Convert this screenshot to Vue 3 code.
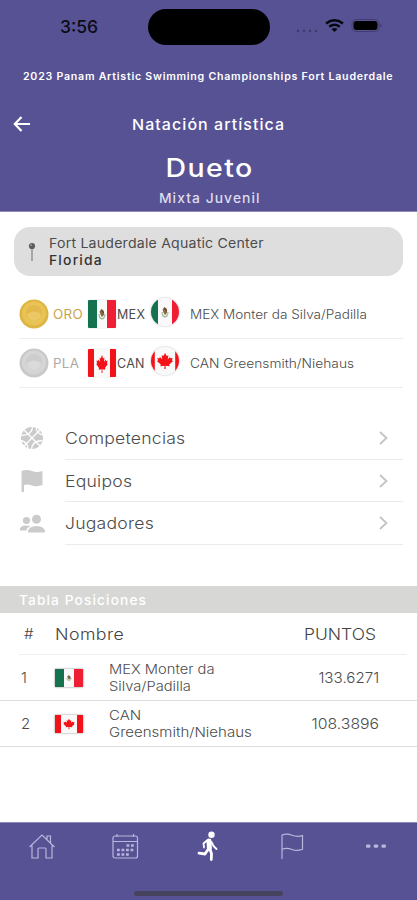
<script setup>
import { h } from 'vue'

const medals = [
  { medal: 'ORO', kind: 'gold', code: 'MEX', name: 'MEX Monter da Silva/Padilla' },
  { medal: 'PLA', kind: 'silver', code: 'CAN', name: 'CAN Greensmith/Niehaus' },
]
const menu = [
  { label: 'Competencias', icon: 'ball' },
  { label: 'Equipos', icon: 'flag' },
  { label: 'Jugadores', icon: 'people' },
]
const standings = [
  { pos: 1, code: 'MEX', first: 'MEX Monter da', second: 'Silva/Padilla', points: '133.6271' },
  { pos: 2, code: 'CAN', first: 'CAN', second: 'Greensmith/Niehaus', points: '108.3896' },
]

// Maple leaf centred on 0,0, about 18 units across
const LEAF = 'M0-9L2-5.500l2-1-.7 4.500L6-4.500l.6 1.500 2.600-.4-.9 2.700L9.500.2 5 4l.5 1.800L.6 5.200.8 9H-.8l.2-3.800-4.900.6L-5 4-9.500.2l1.200-.9-.9-2.700 2.600.4.6-1.500L-3.300-2-4-6.500l2 1z'
function Flag({ code, shape }) {
  const mex = code === 'MEX'
  const round = shape === 'round'
  const side = mex ? (round ? 7 : 9) : round ? 3.8 : 6
  const leaf = { square: 'translate(14 15) scale(.6 1)', round: 'translate(14 14) scale(.84 .9)', small: 'translate(14 14) scale(.6 .9)' }[shape]
  const emblem = shape === 'small' ? 'translate(14 14) scale(.9 1.300)' : 'translate(14 14) scale(1.200 1.600)'
  return h('svg', { viewBox: '0 0 28 28', preserveAspectRatio: 'none' }, [
    h('rect', { width: 28, height: 28, fill: '#f9f9f9' }),
    h('rect', { width: side, height: 28, fill: mex ? '#15724f' : '#f31218' }),
    h('rect', { x: 28 - side, width: side, height: 28, fill: mex ? '#ee1e34' : '#f31218' }),
    mex
      ? h('g', { fill: 'none', transform: emblem }, [
          h('path', { d: 'M-2.500 0q.2 3 2.500 3 2.200 0 2.500-3', stroke: '#a3bb98', 'stroke-width': 1 }),
          h('path', { d: 'M-2-1.500l1.500-1.700L1.500-2 1.700.5 0 2-1.200.5z', fill: '#8b6a42' }),
          h('path', { d: 'M-.5-2.500l2 2', stroke: '#5b4c38', 'stroke-width': 1 }),
        ])
      : h('path', { d: LEAF, transform: leaf, fill: '#f31218' }),
  ])
}
Flag.props = ['code', 'shape']
</script>

<template>
  <div class="screen">
    <header class="top">
      <div class="status">
        <span class="time">3:56</span>
        <div class="island"></div>
        <svg class="signal" viewBox="0 0 86 20">
          <g fill="#403a70"><circle cx="2" cy="14" r="1.300" /><circle cx="8" cy="14" r="1.300" /><circle cx="14" cy="14" r="1.300" /><circle cx="20" cy="14" r="1.300" /></g>
          <g fill="none" stroke="#070711" stroke-width="2.500"><path d="M30 6.500q8.500-6.400 17 0" /><path d="M33.200 9.800q5.300-4 10.600 0" /></g>
          <path d="M35.500 12.100q3-2.200 6 0l-3 2.800z" fill="#070711" />
          <rect x="56" y="2.500" width="27" height="12" rx="4" fill="none" stroke="#423c73" />
          <rect x="57.500" y="4" width="24" height="9" rx="3" fill="#000" />
          <path d="M84.500 6.500q2 2 0 4z" fill="#37325e" />
        </svg>
      </div>
      <div class="event"><span>2023 Panam Artistic Swimming Championships Fort Lauderdale</span></div>
      <div class="nav">
        <svg class="back" viewBox="0 0 18 16"><path d="M8.500 1L1.800 8l6.700 7M2 8h15" fill="none" stroke="#fff" stroke-width="2.200" /></svg>
        <span class="sport">Natación artística</span>
      </div>
      <h1>Dueto</h1>
      <div class="category">Mixta Juvenil</div>
    </header>

    <main>
      <section class="venue">
        <svg viewBox="0 0 10 20"><circle cx="5" cy="4" r="3.100" fill="#5c5c5c" /><circle cx="4" cy="3" r="1" fill="#999" /><path d="M5 7v12" stroke="#888" stroke-width="1.300" /></svg>
        <div><p class="place">Fort Lauderdale Aquatic Center</p><p class="state">Florida</p></div>
      </section>

      <section class="medals">
        <div v-for="m in medals" :key="m.code" class="medal-row">
          <svg class="coin" :class="m.kind" viewBox="0 0 30 30">
            <circle class="rim" cx="15" cy="15" r="14.500" />
            <circle class="inner" cx="15" cy="14.500" r="12" />
            <circle class="face" cx="15" cy="14" r="8" />
            <path class="shine" d="M8 15q7-5 14 0a7 7 0 0 1-14 0z" />
          </svg>
          <span class="medal-name" :class="m.kind">{{ m.medal }}</span>
          <Flag class="square" shape="square" :code="m.code" />
          <span class="code" :class="m.code">{{ m.code }}</span>
          <div class="round"><Flag shape="round" :code="m.code" /></div>
          <span class="athletes" :class="m.code">{{ m.name }}</span>
        </div>
      </section>

      <nav class="menu">
        <div v-for="item in menu" :key="item.label" class="menu-row">
          <svg v-if="item.icon === 'ball'" viewBox="0 0 26 26">
            <circle cx="13" cy="13" r="11" fill="#cbcbcb" />
            <path d="M5 5l16 16M21 5L5 21M13.500 2q-.5 8-11 8.500M12.500 24q.5-8 11-8.500M2 15.500q6.500 1.500 7 8M17 2q.5 6.500 7 8" fill="none" stroke="#fff" stroke-width="1.300" />
          </svg>
          <svg v-else-if="item.icon === 'flag'" viewBox="0 0 26 26"><path d="M2.500 24V3q5-2 10.500 0 5 2 10.500 0v14q-5.500 2-10.500.5-4-1.500-8-.5v7z" fill="#cbcbcb" /></svg>
          <svg v-else viewBox="0 0 26 26"><g fill="#cbcbcb"><circle cx="7.500" cy="9.500" r="3.600" /><path d="M.8 19.500q0-5 6-5 3 0 5 .8-4 1-4.300 4.200z" /><circle cx="17.500" cy="8.300" r="4.500" /><path d="M9 21.500q0-6.500 8.500-6.500t8.500 6.500z" /></g></svg>
          <div class="menu-body">
            <span class="label">{{ item.label }}</span>
            <svg class="chevron" viewBox="0 0 9 14"><path d="M1 1l6.500 6L1 13" fill="none" stroke="#c3c3c3" stroke-width="1.800" /></svg>
          </div>
        </div>
      </nav>

      <section>
        <div class="table-title"><span>Tabla Posiciones</span></div>
        <div class="table-head"><span class="hash">#</span><span class="nombre">Nombre</span><span class="puntos">PUNTOS</span></div>
        <div v-for="s in standings" :key="s.pos" class="standing">
          <span class="pos">{{ s.pos }}</span>
          <Flag class="small" shape="small" :code="s.code" />
          <div class="team" :class="s.code"><p>{{ s.first }}</p><p>{{ s.second }}</p></div>
          <span class="points" :class="s.code">{{ s.points }}</span>
        </div>
      </section>
    </main>

    <footer>
      <div class="tabs">
        <svg viewBox="0 0 30 30" class="line"><path d="M2.500 16L15 4l12.500 12M5 14.500v12.500h6V18q0-1 1-1h6q1 0 1 1v9h6V14.500M20 8.500V5h3.500v7" /></svg>
        <svg viewBox="0 0 30 30" class="line">
          <rect x="3" y="5" width="24.500" height="22" rx="2" /><path d="M3 10.500h24.500M7 3v3M23.500 3v3" />
          <path d="M16.500 14.500h8M7 19h17.500M7 23.500h13" stroke-width="2.600" stroke-dasharray="2.800 1.700" />
        </svg>
        <svg viewBox="0 0 30 30" class="runner">
          <circle cx="18.500" cy="3.800" r="3.200" fill="#fff" />
          <g fill="none" stroke="#fff" stroke-linecap="round" stroke-linejoin="round">
            <path d="M16 10l.4 7" stroke-width="5" />
            <path d="M14 9.500l-3.500 3 .5 4M18.500 11l2 4 3 3" stroke-width="1.800" />
            <path d="M15 18.500l-3 4.500-6-.8M17 18.500l1.500 4-.2 6" stroke-width="2.800" />
          </g>
        </svg>
        <svg viewBox="0 0 30 30" class="line"><path d="M5 28V4q5-2 10 .2 5 2 10.500.4v13.700q-5.500 2.200-10.500.2-5-2-10-.3" /></svg>
        <svg viewBox="0 0 30 30" class="dots"><rect x="6" y="13.500" width="4.400" height="3.200" rx="1" /><rect x="13.800" y="13.500" width="4.400" height="3.200" rx="1" /><rect x="21.500" y="13.500" width="4.400" height="3.200" rx="1" /></svg>
      </div>
      <div class="home-bar"></div>
    </footer>
  </div>
</template>

<style>
body { margin: 0; background: #fff; }
</style>

<style scoped>
* { box-sizing: border-box; }
svg { display: block; flex: none; }
p, h1 { margin: 0; }
span, p { white-space: nowrap; transform-origin: left center; }
.screen { width: 417px; height: 900px; display: flex; flex-direction: column; font-family: Inter, "Open Sans", sans-serif; color: #4c4c4c; background: #fff; }
.top { height: 212px; background: #575294; color: #fff; border-bottom: 1px solid #8e8ab7; flex: none; }
.status { height: 53px; display: flex; align-items: center; padding-left: 60px; }
.time { width: 88px; color: #0c0b18; font-size: 17.500px; font-weight: 500; }
.island { width: 122px; height: 36px; border-radius: 18px; background: #000; }
.signal { width: 86px; height: 20px; margin-left: 26px; }
.event { height: 46px; display: flex; align-items: center; padding-left: 23px; font-size: 9.800px; font-weight: 600; letter-spacing: .7px; }
.event span { transform: scaleX(1.083); }
.nav { height: 50px; display: flex; align-items: center; padding-left: 13px; }
.back { width: 18px; height: 16px; }
.sport { margin-left: 101px; font-size: 15px; font-weight: 500; letter-spacing: 1px; transform: scaleX(1.065); }
h1, .category { width: fit-content; margin: 0 auto; }
h1 { height: 38px; line-height: 38px; font-size: 25px; font-weight: 500; letter-spacing: 1.200px; transform: translateX(1px) scaleX(1.14); }
.category { line-height: 23px; font-size: 13px; font-weight: 500; letter-spacing: 1px; color: #dedceb; transform: translateX(1px) scaleX(1.065); }
main { height: 610px; flex: none; }
.venue { margin: 15px 14px 0; height: 49px; border-radius: 16px; background: #dedede; display: flex; align-items: center; padding-left: 13px; }
.venue svg { width: 10px; height: 20px; margin-right: 12px; }
.venue p { line-height: 17px; }
.place { font-size: 13px; letter-spacing: .2px; transform: scaleX(1.085); }
.state { font-size: 13px; font-weight: 500; letter-spacing: 1.100px; color: #333; transform: scaleX(1.07); }
.medals { padding: 14px 14px 0 19px; }
.medal-row { height: 49px; display: flex; align-items: center; border-bottom: 1px solid #ededed; }
.coin { width: 30px; height: 30px; }
.gold .rim { fill: #deb544; } .gold .inner { fill: #e9c354; } .gold .face { fill: #e3b94c; } .gold .shine { fill: #ebc864; }
.silver .rim { fill: #c9c9c9; } .silver .inner { fill: #d5d5d5; } .silver .face { fill: #cdcdcd; } .silver .shine { fill: #dadada; }
.medal-name { width: 35px; margin-left: 4px; font-size: 12.500px; letter-spacing: .3px; transform: scaleX(1.07); }
.medal-name.gold { color: #c9a24d; } .medal-name.silver { color: #aaa; }
.square { width: 28px; height: 28px; border-radius: 1px; box-shadow: 0 0 1px #aaa; }
.code { width: 34px; margin-left: 1px; font-size: 12.500px; letter-spacing: .3px; }
.round { width: 28px; height: 28px; border-radius: 50%; overflow: hidden; margin-bottom: 5px; box-shadow: 0 0 2px #aaa; }
.athletes { margin-left: 11px; font-size: 12.500px; font-weight: 300; transform: scaleX(1.085); }
.athletes.CAN { transform: scaleX(1.1); }
.menu { padding: 29px 14px 0 19px; }
.menu-row { height: 42.700px; display: flex; align-items: center; }
.menu-row > svg { width: 26px; height: 26px; }
.menu-body { flex: 1; height: 100%; margin-left: 20px; border-bottom: 1px solid #ebebeb; display: flex; align-items: center; justify-content: space-between; font-size: 16px; letter-spacing: .2px; }
.label { font-weight: 300; transform: scaleX(1.1); }
.chevron { width: 9px; height: 14px; margin-right: 15px; }
.table-title { margin-top: 41px; height: 27px; line-height: 28px; padding-left: 19px; background: #d7d7d5; color: #fff; font-size: 13.500px; font-weight: 500; letter-spacing: 1.100px; }
.table-title span { display: inline-block; transform: scaleX(1.015); }
.table-head { height: 42px; display: flex; align-items: center; margin: 0 10px 0 19px; padding: 0 31px 0 5px; border-bottom: 1px solid #eee; font-size: 16px; font-weight: 300; color: #444; }
.hash { width: 31px; font-size: 15px; }
.nombre { flex: 1; letter-spacing: .4px; transform: scaleX(1.11); }
.puntos { transform: scaleX(1.09); transform-origin: right center; }
.standing { height: 46px; display: flex; align-items: center; border-bottom: 1px solid #dedede; padding: 0 38px 0 21px; font-weight: 300; }
.pos { width: 34px; font-size: 15px; }
.small { width: 28px; height: 18px; box-shadow: 0 0 2px #888; }
.team { flex: 1; margin-left: 26px; }
.team p { line-height: 17px; font-size: 13px; transform: scaleX(1.13); }
.team.CAN p { transform: scaleX(1.155); }
.points { font-size: 15px; transform-origin: right center; transform: scaleX(1.01); }
.points.CAN { transform: scaleX(1.055); }
footer { flex: 1; background: #575294; border-top: 1px solid #8e8ab7; display: flex; flex-direction: column; justify-content: space-between; }
.tabs { height: 46px; display: flex; align-items: center; justify-content: space-around; }
.tabs svg { width: 30px; height: 30px; }
.line { fill: none; stroke: #b9b5dc; stroke-width: 1.200; }
.dots { fill: #b9b5dc; }
.home-bar { width: 149px; height: 5px; border-radius: 3px; background: #46435f; margin: 0 auto 4px; }
</style>
